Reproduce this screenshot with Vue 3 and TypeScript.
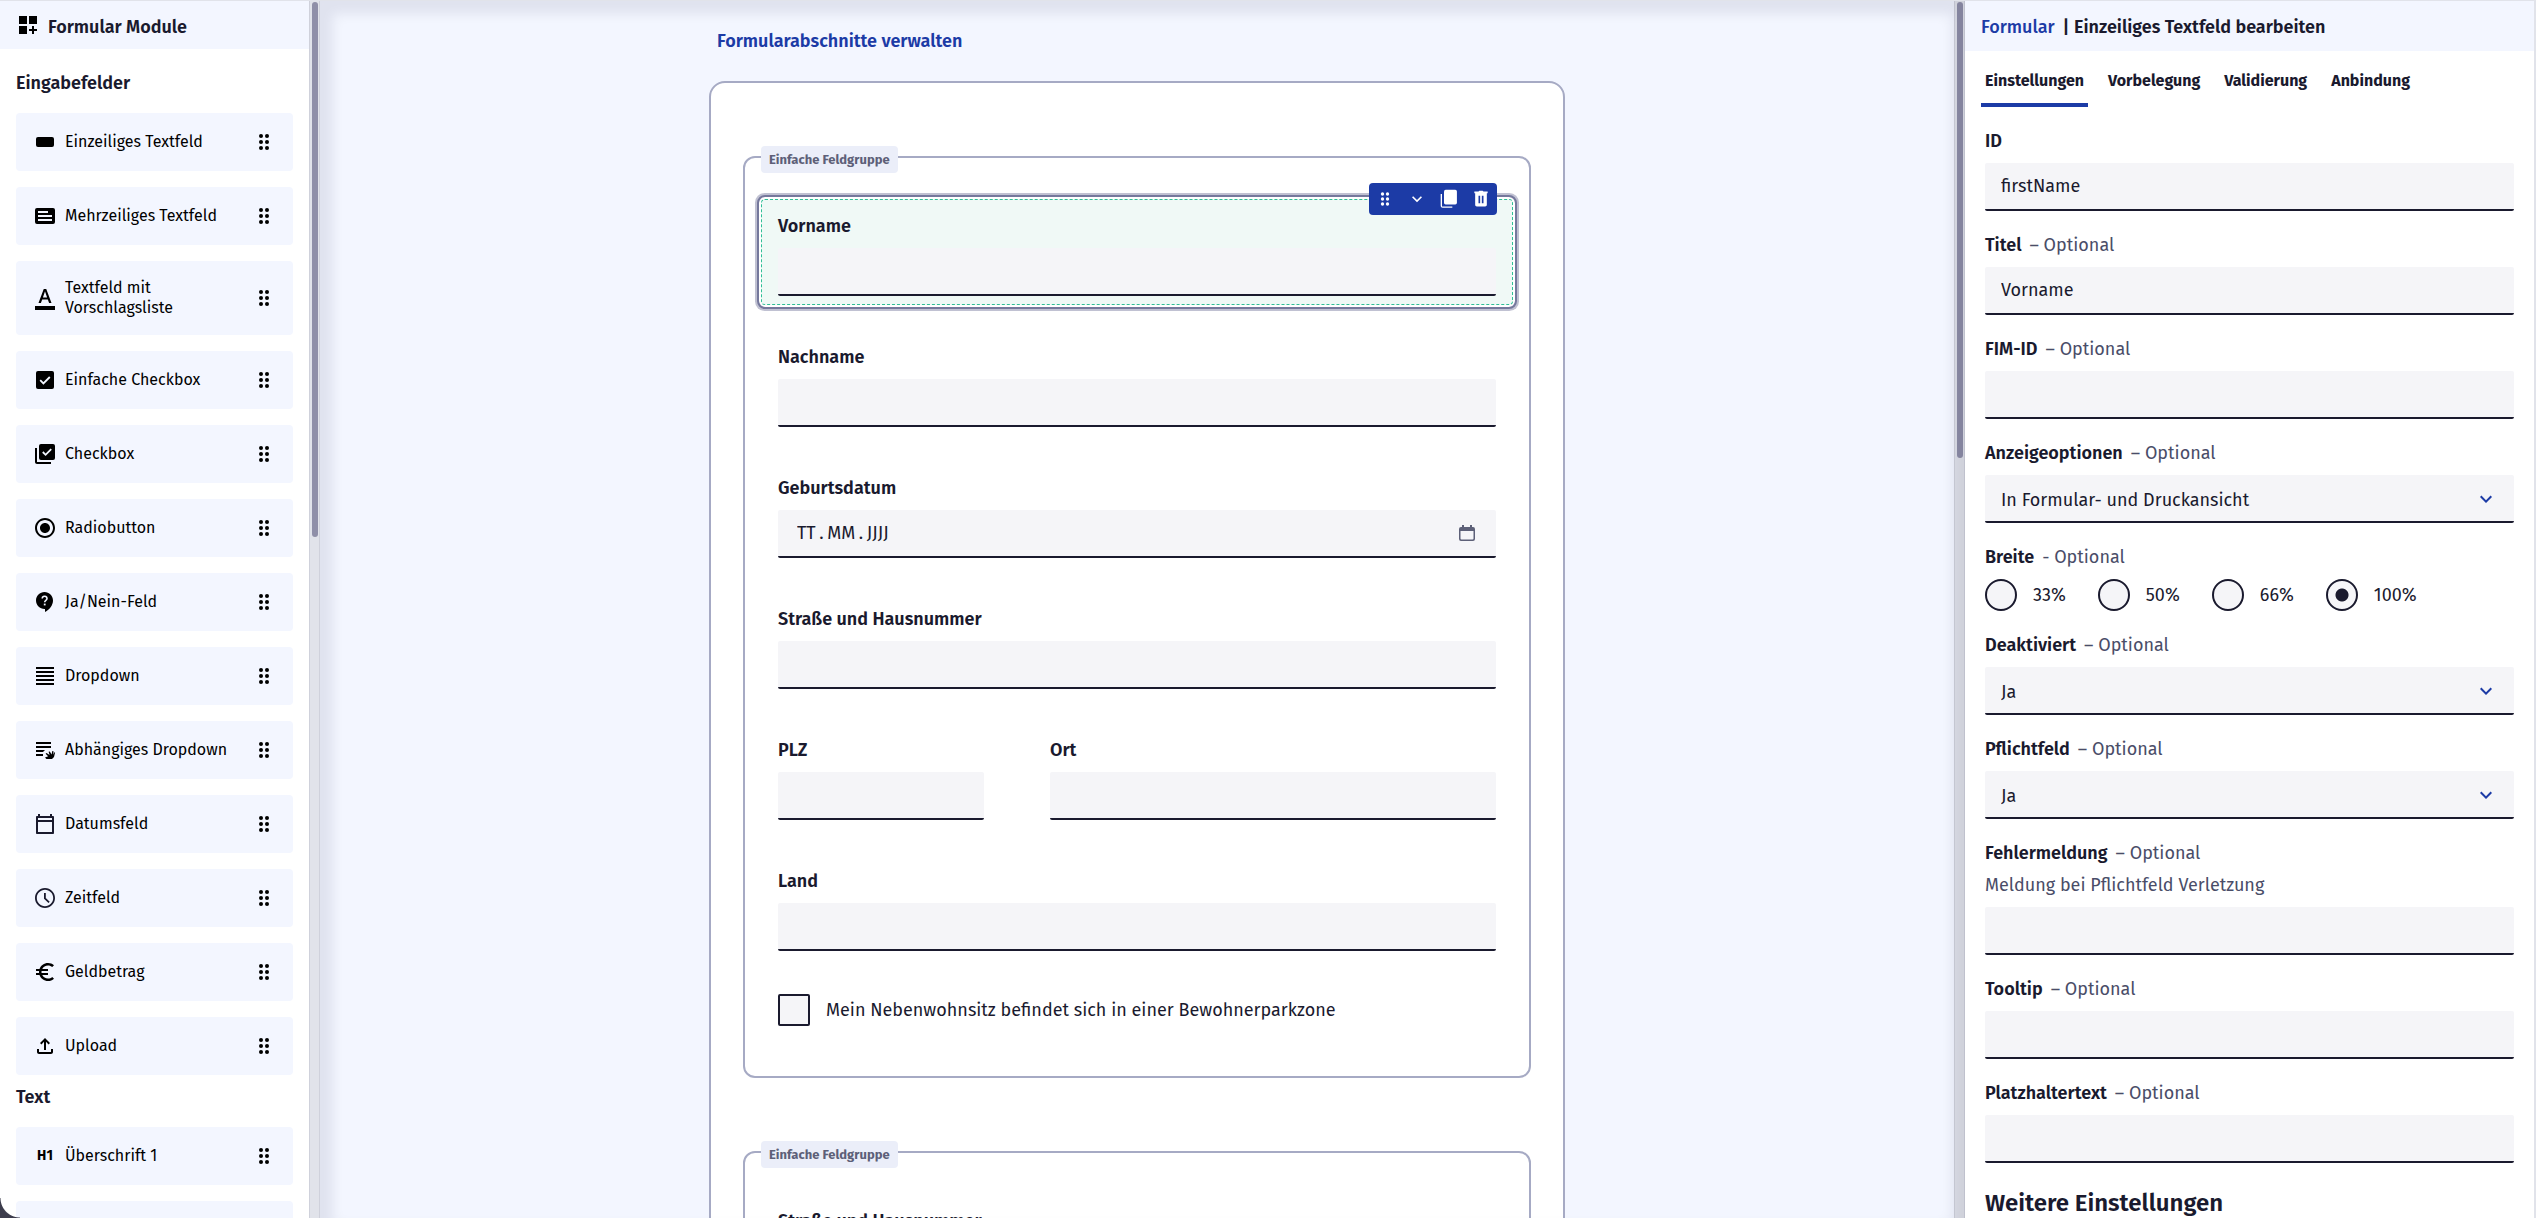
<script setup lang="ts">
import { ref } from 'vue'

interface Module {
  label: string
  icon: string
}

interface Setting {
  id: string
  label: string
  optional?: string
  hint?: string
  kind: 'text' | 'select' | 'radio'
  value?: string
}

const inputModules: Module[] = [
  { label: 'Einzeiliges Textfeld', icon: 'line' },
  { label: 'Mehrzeiliges Textfeld', icon: 'lines' },
  { label: 'Textfeld mit Vorschlagsliste', icon: 'suggest' },
  { label: 'Einfache Checkbox', icon: 'check' },
  { label: 'Checkbox', icon: 'checks' },
  { label: 'Radiobutton', icon: 'radio' },
  { label: 'Ja/Nein-Feld', icon: 'question' },
  { label: 'Dropdown', icon: 'dropdown' },
  { label: 'Abhängiges Dropdown', icon: 'dependent' },
  { label: 'Datumsfeld', icon: 'date' },
  { label: 'Zeitfeld', icon: 'time' },
  { label: 'Geldbetrag', icon: 'euro' },
  { label: 'Upload', icon: 'upload' },
]

const textModules: Module[] = [
  { label: 'Überschrift 1', icon: 'H1' },
  { label: '', icon: '' },
]

const icons: Record<string, string> = {
  line: '<rect x="3" y="7" width="18" height="10" rx="2"/>',
  lines:
    '<path fill-rule="evenodd" d="M4 4h16a2 2 0 0 1 2 2v12a2 2 0 0 1-2 2H4a2 2 0 0 1-2-2V6a2 2 0 0 1 2-2zM5 7v2h10V7zm0 4v2h14v-2zm0 4v2h14v-2z"/>',
  suggest:
    '<path d="M2 20h20v4H2v-4zm3.49-3h2.42l1.27-3.58h5.65L16.09 17h2.42L13.25 3h-2.5L5.49 17zm4.42-5.61l2.03-5.79h.12l2.03 5.79H9.91z"/>',
  check:
    '<rect x="3" y="3" width="18" height="18" rx="2"/><path d="M7.2 12.2l3.2 3.2 6.4-6.4" fill="none" stroke="#f3f6ff" stroke-width="1.8"/>',
  checks:
    '<path d="M4 6H2v14c0 1.1.9 2 2 2h14v-2H4V6z"/><rect x="6" y="2" width="16" height="16" rx="2"/><path d="M9.8 10l2.8 2.8 5.6-5.6" fill="none" stroke="#f3f6ff" stroke-width="1.8"/>',
  radio:
    '<path d="M12 7c-2.76 0-5 2.24-5 5s2.24 5 5 5 5-2.24 5-5-2.24-5-5-5zm0-5C6.48 2 2 6.48 2 12s4.48 10 10 10 10-4.48 10-10S17.52 2 12 2zm0 18c-4.42 0-8-3.58-8-8s3.58-8 8-8 8 3.58 8 8-3.58 8-8 8z"/>',
  question:
    '<path d="M11.5 2C6.81 2 3 5.81 3 10.5S6.81 19 11.5 19h.5v3c4.86-2.34 8-7 8-11.5C20 5.81 16.19 2 11.5 2z"/><path d="M9.2 8.4a2.4 2.2 0 1 1 3.7 1.9c-.9.6-1.2 1-1.2 2" fill="none" stroke="#f3f6ff" stroke-width="1.6"/><rect x="10.8" y="13.6" width="1.8" height="1.8" fill="#f3f6ff"/>',
  dropdown: '<path d="M3 3h18v2H3zm0 4h18v2H3zm0 4h18v2H3zm0 4h18v2H3zm0 4h18v2H3z"/>',
  dependent:
    '<path d="M3 4h15v2H3zm0 4h15v2H3zm0 4h9l-2 2H3zm0 4h7v2H3z"/><path d="M12 19.4l3.2-1.2-2.6-2.4.9-.9 3.1 2.1-1-3.2 1.2-.4 1.8 3 .7-3.3 1.2.2-.2 3.4 1.1-2.5.7.4-1.1 4.4-2 2h-5.6z"/>',
  date: '<path fill="#1a1a2e" d="M20 4h-1V2h-2v2H7V2H5v2H4c-.6 0-1 .5-1 1v16c0 .5.4 1 1 1h16c.6 0 1-.5 1-1V5c0-.5-.4-1-1-1zm-1 16H5V10h14v10zm0-12H5V6h14v2z"/>',
  time: '<path fill="#1a1a2e" d="M11.99 2C6.47 2 2 6.48 2 12s4.47 10 9.99 10C17.52 22 22 17.52 22 12S17.52 2 11.99 2zM12 20.2c-4.53 0-8.2-3.67-8.2-8.2S7.47 3.8 12 3.8s8.2 3.67 8.2 8.2-3.67 8.2-8.2 8.2z"/><path fill="none" stroke="#1a1a2e" stroke-width="1.8" d="M11.900 7v5.400l4.200 4"/>',
  euro: '<path d="M15 18.5c-2.51 0-4.68-1.42-5.76-3.5H15v-2H8.58c-.05-.33-.08-.66-.08-1s.03-.67.08-1H15V9H9.24C10.32 6.92 12.5 5.5 15 5.5c1.61 0 3.09.59 4.23 1.57L21 5.3C19.41 3.87 17.3 3 15 3c-3.92 0-7.24 2.51-8.48 6H3v2h3.06c-.04.33-.06.66-.06 1s.02.67.06 1H3v2h3.52c1.24 3.49 4.56 6 8.48 6 2.31 0 4.41-.87 6-2.3l-1.78-1.77c-1.13.98-2.6 1.57-4.22 1.57z"/>',
  upload:
    '<path d="M11 16V7.85l-2.6 2.6L7 9l5-5 5 5-1.4 1.45-2.6-2.6V16h-2zm-5 4c-1.1 0-2-.9-2-2v-3h2v3h12v-3h2v3c0 1.1-.9 2-2 2H6z"/>',
  grip: '<circle cx="9" cy="6" r="2"/><circle cx="15" cy="6" r="2"/><circle cx="9" cy="12" r="2"/><circle cx="15" cy="12" r="2"/><circle cx="9" cy="18" r="2"/><circle cx="15" cy="18" r="2"/>',
  chevron: '<path d="M7.41 8.59L12 13.17l4.59-4.58L18 10l-6 6-6-6z"/>',
  copy: '<path d="M16 21v1.6H4.4c-1.3 0-2.4-1-2.4-2.4V6h1.6v15z"/><rect x="6" y="1" width="15.500" height="17.500" rx="2"/>',
  trash:
    '<path fill-rule="evenodd" d="M4 3h5l1-1h4l1 1h5v2h-1v14c0 1.1-.9 2-2 2H7c-1.1 0-2-.9-2-2V5H4zM9 8v9h2V8zm4 0v9h2V8z"/>',
}

const toolbar = [
  { icon: 'grip', label: 'Verschieben' },
  { icon: 'chevron', label: 'Nach unten' },
  { icon: 'copy', label: 'Duplizieren' },
  { icon: 'trash', label: 'Löschen' },
]

// Thin spaces set the date parts apart from their dots.
const datePattern = ['TT', 'MM', 'JJJJ'].join('\u2009.\u2009')

const tabs = ['Einstellungen', 'Vorbelegung', 'Validierung', 'Anbindung']
const activeTab = ref('Einstellungen')
const widths = ['33%', '50%', '66%', '100%']
const width = ref('100%')

const settings = ref<Setting[]>([
  { id: 'id', label: 'ID', kind: 'text', value: 'firstName' },
  { id: 'titel', label: 'Titel', optional: '– Optional', kind: 'text', value: 'Vorname' },
  { id: 'fim', label: 'FIM-ID', optional: '– Optional', kind: 'text', value: '' },
  { id: 'anzeige', label: 'Anzeigeoptionen', optional: '– Optional', kind: 'select', value: 'In Formular- und Druckansicht' },
  { id: 'breite', label: 'Breite', optional: '- Optional', kind: 'radio' },
  { id: 'deaktiviert', label: 'Deaktiviert', optional: '– Optional', kind: 'select', value: 'Ja' },
  { id: 'pflicht', label: 'Pflichtfeld', optional: '– Optional', kind: 'select', value: 'Ja' },
  { id: 'fehler', label: 'Fehlermeldung', optional: '– Optional', hint: 'Meldung bei Pflichtfeld Verletzung', kind: 'text', value: '' },
  { id: 'tooltip', label: 'Tooltip', optional: '– Optional', kind: 'text', value: '' },
  { id: 'platzhalter', label: 'Platzhaltertext', optional: '– Optional', kind: 'text', value: '' },
])
</script>

<template>
  <div class="app">
    <aside class="modules">
      <header class="modules-head">
        <svg class="icon" viewBox="0 0 24 24" aria-hidden="true">
          <path d="M3 3h8v8H3zm10 0h8v8h-8zM3 13h8v8H3zm15 0h-2v3h-3v2h3v3h2v-3h3v-2h-3z" />
        </svg>
        <h1>Formular Module</h1>
      </header>
      <h2>Eingabefelder</h2>
      <ul class="module-list">
        <li v-for="m in inputModules" :key="m.label" class="module">
          <svg class="icon" viewBox="0 0 24 24" aria-hidden="true" v-html="icons[m.icon]" />
          <span class="module-label">{{ m.label }}</span>
          <svg class="icon" viewBox="0 0 24 24" aria-hidden="true" v-html="icons.grip" />
        </li>
      </ul>
      <h2 class="second">Text</h2>
      <ul class="module-list">
        <li v-for="m in textModules" :key="m.label" class="module">
          <span class="heading-icon">{{ m.icon }}</span>
          <span class="module-label">{{ m.label }}</span>
          <svg class="icon" viewBox="0 0 24 24" aria-hidden="true" v-html="icons.grip" />
        </li>
      </ul>
    </aside>
    <div class="track"><div class="thumb"></div></div>

    <main class="canvas">
      <div class="canvas-body">
        <div class="sheet-wrap">
          <a class="manage" href="#abschnitte">Formularabschnitte verwalten</a>
          <form class="sheet">
            <section class="group">
              <span class="badge">Einfache Feldgruppe</span>
              <div class="field selected">
                <label for="f-vorname">Vorname</label>
                <input id="f-vorname" class="box" type="text" />
                <div class="toolbar">
                  <button v-for="t in toolbar" :key="t.icon" type="button" :aria-label="t.label">
                    <svg viewBox="0 0 24 24" aria-hidden="true" v-html="icons[t.icon]" />
                  </button>
                </div>
              </div>
              <div class="field">
                <label for="f-nachname">Nachname</label>
                <input id="f-nachname" class="box" type="text" />
              </div>
              <div class="field">
                <label for="f-geburt">Geburtsdatum</label>
                <div class="box date">
                  <input id="f-geburt" type="text" :placeholder="datePattern" />
                  <button type="button" aria-label="Kalender öffnen">
                    <svg viewBox="0 0 20 20" aria-hidden="true">
                      <path
                        fill-rule="evenodd"
                        d="M4 4h1V2h2v2h6V2h2v2h1a2 2 0 0 1 2 2v10a2 2 0 0 1-2 2H4a2 2 0 0 1-2-2V6a2 2 0 0 1 2-2zM3.500 8v7.500a1 1 0 0 0 1 1h11a1 1 0 0 0 1-1V8z"
                      />
                    </svg>
                  </button>
                </div>
              </div>
              <div class="field">
                <label for="f-strasse">Straße und Hausnummer</label>
                <input id="f-strasse" class="box" type="text" />
              </div>
              <div class="row">
                <div class="field">
                  <label for="f-plz">PLZ</label>
                  <input id="f-plz" class="box" type="text" />
                </div>
                <div class="field">
                  <label for="f-ort">Ort</label>
                  <input id="f-ort" class="box" type="text" />
                </div>
              </div>
              <div class="field">
                <label for="f-land">Land</label>
                <input id="f-land" class="box" type="text" />
              </div>
              <label class="tick">
                <input type="checkbox" />
                <span>Mein Nebenwohnsitz befindet sich in einer Bewohnerparkzone</span>
              </label>
            </section>
            <section class="group">
              <span class="badge">Einfache Feldgruppe</span>
              <div class="field">
                <label for="f-strasse2">Straße und Hausnummer</label>
                <input id="f-strasse2" class="box" type="text" />
              </div>
            </section>
          </form>
        </div>
      </div>
      <div class="track"><div class="thumb short"></div></div>
    </main>

    <aside class="settings">
      <header class="settings-head">
        <a href="#formular">Formular</a>
        <h1>| Einzeiliges Textfeld bearbeiten</h1>
      </header>
      <nav class="tabs" role="tablist">
        <button
          v-for="t in tabs"
          :key="t"
          type="button"
          role="tab"
          :aria-selected="t === activeTab"
          :class="{ active: t === activeTab }"
          @click="activeTab = t"
        >
          {{ t }}
        </button>
      </nav>
      <div class="settings-body">
        <div v-for="s in settings" :key="s.id" class="setting">
          <component
            :is="s.kind === 'radio' ? 'span' : 'label'"
            :id="'l-' + s.id"
            class="name"
            :for="s.kind === 'radio' ? undefined : 's-' + s.id"
          >
            <span>{{ s.label }}</span>
            <span v-if="s.optional" class="optional">{{ s.optional }}</span>
          </component>
          <p v-if="s.hint" class="hint">{{ s.hint }}</p>
          <input v-if="s.kind === 'text'" :id="'s-' + s.id" v-model="s.value" class="box" type="text" />
          <div v-else-if="s.kind === 'select'" class="select">
            <select :id="'s-' + s.id" class="box">
              <option>{{ s.value }}</option>
            </select>
            <svg class="icon" viewBox="0 0 24 24" aria-hidden="true" v-html="icons.chevron" />
          </div>
          <div v-else class="radios" role="radiogroup" :aria-labelledby="'l-' + s.id">
            <label v-for="w in widths" :key="w">
              <input v-model="width" type="radio" name="breite" :value="w" />
              <span>{{ w }}</span>
            </label>
          </div>
        </div>
        <h2>Weitere Einstellungen</h2>
      </div>
    </aside>
    <div class="corner" aria-hidden="true"></div>
  </div>
</template>

<style>
body {
  margin: 0;
}
</style>

<style scoped>
.app {
  position: relative;
  box-sizing: border-box;
  display: flex;
  height: 100vh;
  overflow: hidden;
  border-top: 1px solid #e1e3ea;
  background: #fff;
  color: #1a1a2e;
  font-family: 'Fira Sans', 'Noto Sans', sans-serif;
  font-size: 18px;
  line-height: 24px;
}
.app * {
  box-sizing: border-box;
}
h1,
h2,
p,
ul {
  margin: 0;
  padding: 0;
}
h1,
h2 {
  font-size: 18px;
  font-weight: 600;
}
a {
  color: #1c3ba6;
  text-decoration: none;
}
button,
input,
select {
  margin: 0;
  padding: 0;
  border: 0;
  background: none;
  color: inherit;
  font: inherit;
}
.icon {
  flex: none;
  width: 24px;
  height: 24px;
  fill: #000;
}

/* Module list */
.modules {
  flex: none;
  width: 309px;
  overflow: hidden;
}
.modules-head {
  display: flex;
  align-items: center;
  gap: 8px;
  height: 48px;
  padding: 0 16px;
  background: #f3f6ff;
}
.modules-head h1 {
  padding-top: 4px;
}
.modules h2 {
  padding: 22px 16px 18px;
}
.modules h2.second {
  padding-top: 10px;
}
.module-list {
  display: flex;
  flex-direction: column;
  gap: 16px;
  padding: 0 16px;
  list-style: none;
}
.module {
  display: flex;
  align-items: center;
  gap: 8px;
  min-height: 58px;
  padding: 17px;
  border-radius: 4px;
  background: #f3f6ff;
  color: #000;
  font-size: 16px;
  line-height: 20px;
}
.module-label {
  flex: 1;
}
.heading-icon {
  width: 24px;
  font-size: 14px;
  font-weight: 700;
  text-align: center;
}

/* Scroll bars */
.track {
  flex: none;
  width: 11px;
  padding: 1px 2px;
  border: 1px solid #cfd1db;
  border-width: 0 1px;
  background: #e1e3ea;
}
.thumb {
  width: 6px;
  height: 44%;
  border-radius: 3px;
  background: #8f8fa8;
}
.thumb.short {
  height: 456px;
}

/* Form canvas */
.canvas {
  position: relative;
  display: flex;
  flex: 1;
  min-width: 0;
  overflow: hidden;
  background: #f3f6ff;
}
.canvas::after {
  content: '';
  position: absolute;
  inset: 0 0 -20px;
  box-shadow: inset 0 0 12px 13px rgba(16, 16, 48, 0.08);
  pointer-events: none;
}
.canvas-body {
  display: flex;
  flex: 1;
  justify-content: center;
  height: 100%;
}
.sheet-wrap {
  flex: none;
  width: 856px;
  max-width: 100%;
}
.manage {
  display: block;
  padding: 28px 8px;
  font-weight: 600;
}
.sheet {
  display: flex;
  flex-direction: column;
  gap: 73px;
  padding: 73px 32px;
  border: 2px solid #a6aac4;
  border-radius: 16px;
  background: #fff;
}
.group {
  position: relative;
  display: flex;
  flex-direction: column;
  gap: 25px;
  padding: 41px 16px 50px;
  border: 2px solid #a6aac4;
  border-radius: 12px;
}
.badge {
  position: absolute;
  top: -12px;
  left: 16px;
  padding: 4px 8px 3px;
  border-radius: 4px;
  background: #ebeef9;
  color: #5d5f78;
  font-size: 13px;
  font-weight: 700;
  line-height: 20px;
}
.field {
  display: flex;
  flex-direction: column;
  gap: 10px;
  padding: 15px 17px 9px;
}
.field > label {
  font-weight: 600;
}
.field.selected {
  position: relative;
  padding: 14px 16px 8px;
  border: 1px dashed #2fbf96;
  border-radius: 4px;
  outline: 2px solid #75789c;
  outline-offset: 2px;
  background: #f0f9f6;
  box-shadow:
    0 0 0 2px #fff,
    0 0 0 6px #c0c1d2;
}
.box {
  width: 100%;
  height: 48px;
  padding: 0 16px;
  border-bottom: 2px solid #1a1a2e;
  border-radius: 2px;
  background: #f5f5f8;
}
.row {
  display: flex;
}
.row .field:first-child {
  flex: 206 1 34px;
}
.row .field:last-child {
  flex: 446 1 34px;
  margin-left: 32px;
}
.date {
  display: flex;
  align-items: center;
  padding: 0 19px;
}
.date input {
  flex: 1;
  min-width: 0;
}
.date input::placeholder {
  color: #1a1a2e;
  opacity: 1;
}
.date button {
  display: flex;
}
.date svg {
  width: 20px;
  height: 20px;
  fill: #5d6078;
}
.toolbar {
  position: absolute;
  top: -17px;
  right: 15px;
  display: flex;
  border-radius: 4px;
  background: #1c3ba6;
}
.toolbar button {
  display: grid;
  place-items: center;
  width: 32px;
  height: 32px;
}
.toolbar svg {
  width: 20px;
  height: 20px;
  fill: #fff;
}
.tick {
  display: flex;
  align-items: center;
  gap: 16px;
  padding: 9px 17px 0;
}
.tick input {
  width: 32px;
  height: 32px;
  appearance: none;
  border: 2px solid #1a1a2e;
  border-radius: 2px;
  background: #f5f5f8;
}

/* Settings */
.settings {
  flex: none;
  width: 571px;
  overflow: hidden;
  border-right: 2px solid #e1e3ea;
}
.settings-head {
  display: flex;
  align-items: center;
  gap: 8px;
  height: 50px;
  padding: 2px 16px 0;
  background: #f3f6ff;
}
.settings-head a {
  font-weight: 500;
}
.tabs {
  display: flex;
  gap: 16px;
  padding: 0 16px;
}
.tabs button {
  height: 56px;
  padding: 8px 4px 0;
  border-bottom: 4px solid transparent;
  font-size: 16px;
  font-weight: 700;
}
.tabs .active {
  border-color: #1c3ba6;
}
.settings-body {
  display: flex;
  flex-direction: column;
  gap: 22px;
  padding: 22px 20px 0;
}
.setting {
  display: flex;
  flex-direction: column;
  gap: 10px;
}
.name {
  display: flex;
  gap: 8px;
  font-weight: 600;
}
.optional,
.hint {
  color: #4a4d68;
  font-weight: 400;
}
.hint {
  margin-top: -2px;
}
.select {
  position: relative;
}
.select select {
  display: block;
  padding-top: 3px;
  appearance: none;
}
.select .icon {
  position: absolute;
  top: 12px;
  right: 16px;
  fill: #1c3ba6;
  pointer-events: none;
}
.radios {
  display: flex;
  gap: 32px;
}
.radios label {
  display: flex;
  align-items: center;
  gap: 16px;
}
.radios input {
  width: 32px;
  height: 32px;
  appearance: none;
  border: 2px solid #1a1a2e;
  border-radius: 50%;
  background: #f5f5f8;
}
.radios input:checked {
  background: radial-gradient(circle, #1a1a2e 6px, #f5f5f8 7px);
}
.settings-body h2 {
  padding-top: 2px;
  font-size: 24px;
  line-height: 32px;
}
.corner {
  position: absolute;
  bottom: 0;
  left: 0;
  width: 20px;
  height: 20px;
  background: radial-gradient(circle at 100% 0, transparent 19px, #3c3c4c 20px);
}
</style>
